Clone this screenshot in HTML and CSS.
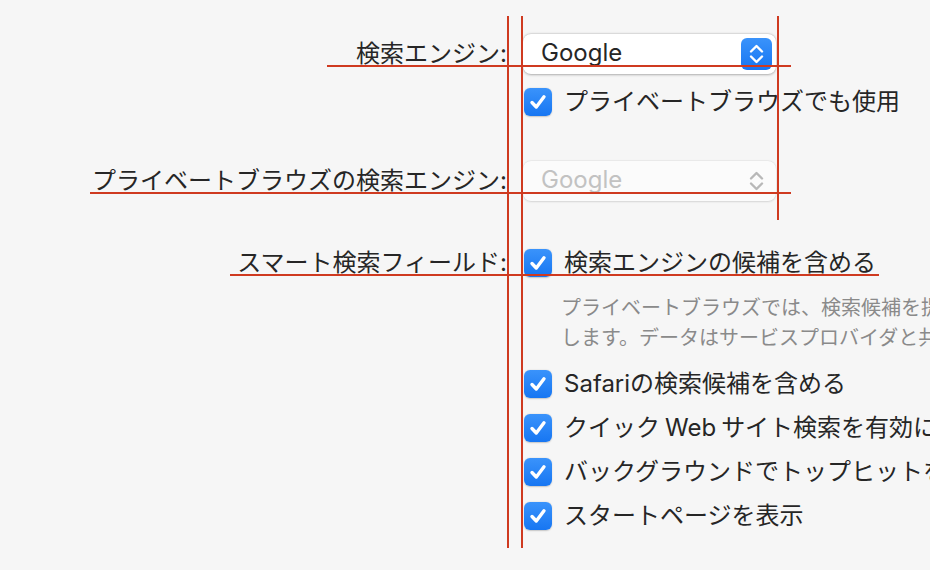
FILE: index.html
```html
<!DOCTYPE html>
<html lang="ja">
<head>
    <meta charset="UTF-8">
    <meta name="viewport" content="width=device-width, initial-scale=1.0">
    <title>検索</title>
    <link rel="stylesheet" href="styles.css">
</head>
<body>
    <div class="prefs">
        <div class="row row-engine">
            <div class="label">検索エンジン:</div>
            <div class="popup">
                <span class="popup-value">Google</span>
                <span class="stepper">
                    <svg width="31" height="32" viewBox="0 0 31 32">
                        <path d="M10 13.5 L15.5 8 L21 13.5" />
                        <path d="M10 18.5 L15.5 24 L21 18.5" />
                    </svg>
                </span>
            </div>
        </div>

        <div class="row row-private-use">
            <div class="label"></div>
            <div class="check">
                <span class="box"><svg width="28" height="28" viewBox="0 0 28 28"><path d="M8 14.5 L12.3 19 L20 8.8" /></svg></span>
                <span>プライベートブラウズでも使用</span>
            </div>
        </div>

        <div class="row row-private-engine">
            <div class="label">プライベートブラウズの検索エンジン:</div>
            <div class="popup popup-disabled">
                <span class="popup-value">Google</span>
                <span class="stepper">
                    <svg width="31" height="32" viewBox="0 0 31 32">
                        <path d="M10 13.5 L15.5 8 L21 13.5" />
                        <path d="M10 18.5 L15.5 24 L21 18.5" />
                    </svg>
                </span>
            </div>
        </div>

        <div class="row row-smart">
            <div class="label">スマート検索フィールド:</div>
            <div class="check">
                <span class="box"><svg width="28" height="28" viewBox="0 0 28 28"><path d="M8 14.5 L12.3 19 L20 8.8" /></svg></span>
                <span>検索エンジンの候補を含める</span>
            </div>
        </div>

        <div class="row row-note">
            <div class="label"></div>
            <p class="note">プライベートブラウズでは、検索候補を提供するために検索データを暗号化して送信<br>します。データはサービスプロバイダと共有されることはありません。</p>
        </div>

        <div class="row row-option first">
            <div class="label"></div>
            <div class="check">
                <span class="box"><svg width="28" height="28" viewBox="0 0 28 28"><path d="M8 14.5 L12.3 19 L20 8.8" /></svg></span>
                <span>Safariの検索候補を含める</span>
            </div>
        </div>
        <div class="row row-option">
            <div class="label"></div>
            <div class="check">
                <span class="box"><svg width="28" height="28" viewBox="0 0 28 28"><path d="M8 14.5 L12.3 19 L20 8.8" /></svg></span>
                <span>クイック<span class="latin">Web</span>サイト検索を有効にする</span>
            </div>
        </div>
        <div class="row row-option">
            <div class="label"></div>
            <div class="check">
                <span class="box"><svg width="28" height="28" viewBox="0 0 28 28"><path d="M8 14.5 L12.3 19 L20 8.8" /></svg></span>
                <span>バックグラウンドでトップヒットを事前に読み込む</span>
            </div>
        </div>
        <div class="row row-option">
            <div class="label"></div>
            <div class="check">
                <span class="box"><svg width="28" height="28" viewBox="0 0 28 28"><path d="M8 14.5 L12.3 19 L20 8.8" /></svg></span>
                <span>スタートページを表示</span>
            </div>
        </div>
    </div>

    <!-- ガイド線 -->
    <div class="guide guide-v1"></div>
    <div class="guide guide-v2"></div>
    <div class="guide guide-v3"></div>
    <div class="guide guide-h1"></div>
    <div class="guide guide-h2"></div>
    <div class="guide guide-h3"></div>
</body>
</html>
```

FILE: styles.css
```css
/* 全体 */
html, body {
    margin: 0;
    height: 100%;
    overflow: hidden;
}

body {
    background: #f6f6f6;
    color: #262626;
    font-family: "Inter", "Noto Sans CJK JP", sans-serif;
    font-size: 24px;
    position: relative;
}

.prefs {
    padding-top: 34px;
}

/* 行 */
.row {
    display: grid;
    grid-template-columns: 507px auto;
    column-gap: 16px;
    align-items: center;
    white-space: nowrap;
}

.label {
    text-align: right;
    line-height: 28px;
}

.row-engine {
    height: 40px;
}

.row-private-use {
    margin-top: 14px;
    height: 28px;
}

.row-private-engine {
    margin-top: 45px;
    height: 40px;
}

.row-smart {
    margin-top: 48px;
    height: 28px;
}

.row-note {
    margin-top: 16px;
}

.row-option {
    margin-top: 16px;
    height: 28px;
}

.row-option.first {
    margin-top: 17px;
}

/* ポップアップ */
.popup {
    width: 253px;
    height: 40px;
    box-sizing: border-box;
    background: #fff;
    border-radius: 8px;
    box-shadow: 0 0.5px 2.5px rgba(0, 0, 0, 0.28), 0 0 0 0.5px rgba(0, 0, 0, 0.06);
    display: flex;
    align-items: center;
    justify-content: space-between;
    padding: 0 4px 0 18px;
}

.popup-value {
    line-height: 28px;
    margin-top: -2px;
}

.stepper {
    width: 31px;
    height: 32px;
    border-radius: 6px;
    background: linear-gradient(#3a93fb, #1776f2);
    display: flex;
}

.stepper svg path {
    fill: none;
    stroke: #fff;
    stroke-width: 2.4;
    stroke-linecap: round;
    stroke-linejoin: round;
}

.popup-disabled {
    background: #fbfbfb;
    box-shadow: 0 0.5px 2px rgba(0, 0, 0, 0.12), 0 0 0 0.5px rgba(0, 0, 0, 0.04);
    color: #c2c2c2;
}

.popup-disabled .stepper {
    background: none;
}

.popup-disabled .stepper svg path {
    stroke: #b8b8b8;
}

/* チェックボックス */
.check {
    display: flex;
    align-items: center;
    gap: 12px;
    margin-left: 1px;
    line-height: 28px;
}

.box {
    width: 28px;
    height: 28px;
    flex: none;
    border-radius: 6px;
    background: linear-gradient(#3a93fb, #1776f2);
    box-shadow: 0 0.5px 1.5px rgba(0, 0, 0, 0.2);
    display: flex;
}

.box svg path {
    fill: none;
    stroke: #fff;
    stroke-width: 3.4;
    stroke-linecap: round;
    stroke-linejoin: round;
}

/* 和文と欧文の間 */
.latin {
    margin: 0 5px;
}

/* 説明文 */
.note {
    margin: 0 0 0 38px;
    font-size: 20px;
    line-height: 30px;
    color: #8a8a8a;
}

/* ガイド線 */
.guide {
    position: absolute;
    background: #cf3a20;
}

.guide-v1 {
    left: 507px;
    top: 16px;
    width: 2px;
    height: 532px;
}

.guide-v2 {
    left: 521px;
    top: 16px;
    width: 2px;
    height: 532px;
}

.guide-v3 {
    left: 777px;
    top: 16px;
    width: 2px;
    height: 204px;
}

.guide-h1 {
    left: 327px;
    top: 65px;
    width: 464px;
    height: 2px;
}

.guide-h2 {
    left: 90px;
    top: 192px;
    width: 701px;
    height: 2px;
}

.guide-h3 {
    left: 230px;
    top: 274px;
    width: 649px;
    height: 2px;
}
```
